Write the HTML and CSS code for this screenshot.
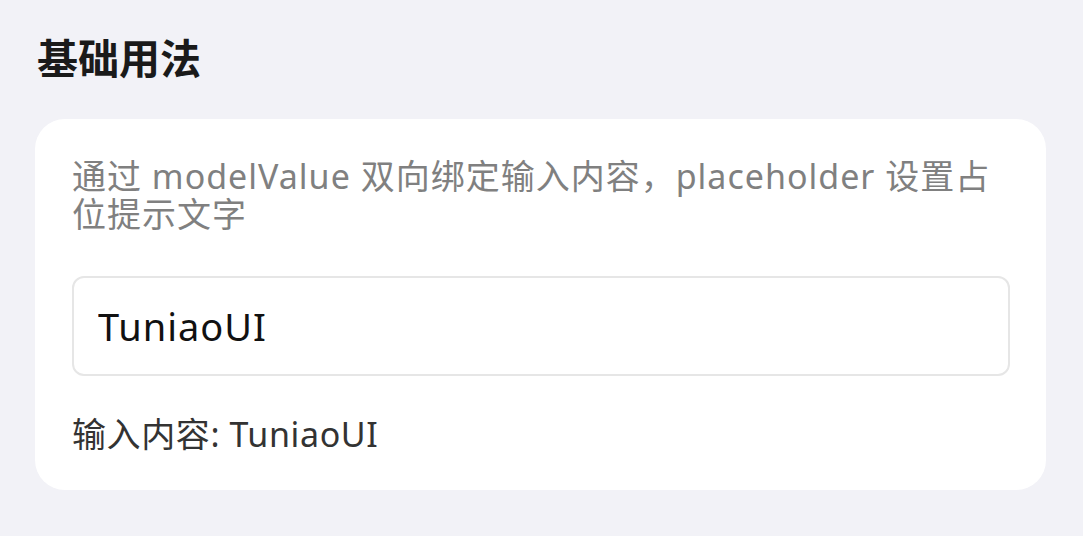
FILE: index.html
```html
<!DOCTYPE html>
<html lang="zh-CN">
<head>
    <meta charset="UTF-8">
    <meta name="viewport" content="width=device-width, initial-scale=1.0">
    <title>Input 基础用法</title>
    <link rel="stylesheet" href="styles.css">
</head>
<body>
    <h1 class="section-title">基础用法</h1>
    <div class="demo-card">
        <p class="demo-desc">通过 modelValue 双向绑定输入内容，placeholder 设置占位提示文字</p>
        <input class="demo-input" type="text" value="TuniaoUI" placeholder="请输入内容">
        <p class="demo-result">输入内容: <span id="result">TuniaoUI</span></p>
    </div>

    <script>
        const input = document.querySelector('.demo-input');
        const result = document.getElementById('result');

        input.addEventListener('input', () => {
            result.textContent = input.value;
        });
    </script>
</body>
</html>
```

FILE: styles.css
```css
body {
    margin: 0;
    padding: 0 37px 0 35px;
    background: #f2f2f7;
    font-family: "Noto Sans", "Noto Sans CJK SC", sans-serif;
    color: #333;
}

.section-title {
    margin: 28px 0 31px 2px;
    font-size: 41px;
    line-height: 60px;
    font-weight: bold;
    color: #1a1a1a;
}

.demo-card {
    background: #fff;
    border-radius: 30px;
    padding: 38px 36px 37px 37px;
}

.demo-desc {
    margin: 0;
    font-size: 34px;
    line-height: 38px;
    letter-spacing: 1px;
    color: #808080;
}

.demo-input {
    display: block;
    box-sizing: border-box;
    width: 100%;
    height: 100px;
    margin: 43px 0 39px;
    padding: 0 24px;
    border: 2px solid #e6e6e6;
    border-radius: 12px;
    font-family: inherit;
    font-size: 38px;
    letter-spacing: 1px;
    color: #111;
    background: #fff;
    outline: none;
}

.demo-result {
    margin: 0;
    font-size: 34px;
    line-height: 38px;
    letter-spacing: 0.6px;
    color: #333;
}
```
